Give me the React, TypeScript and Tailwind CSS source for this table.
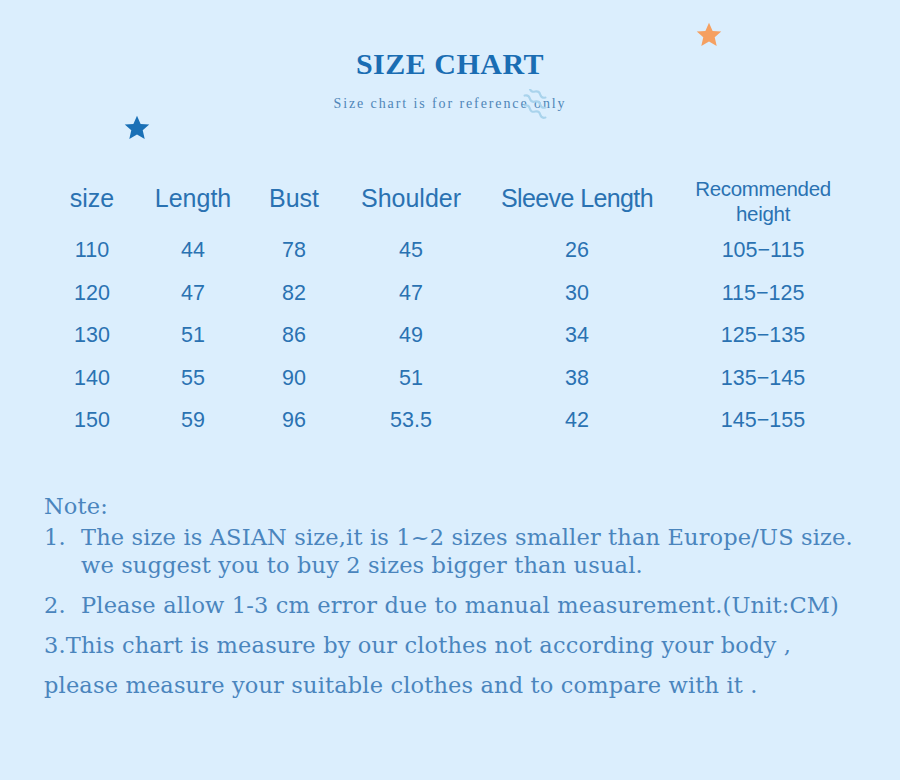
import React from 'react'

const rows = [
  ['110', '44', '78', '45', '26', '105−115'],
  ['120', '47', '82', '47', '30', '115−125'],
  ['130', '51', '86', '49', '34', '125−135'],
  ['140', '55', '90', '51', '38', '135−145'],
  ['150', '59', '96', '53.5', '42', '145−155'],
]

const cols = ['w-[100px]', 'w-[102px]', 'w-[100px]', 'w-[134px]', 'w-[198px]', 'w-[174px]']

function Star({ className, color }: { className: string; color: string }) {
  return (
    <svg viewBox="0 0 24 24" className={className}>
      <path
        d="M12 1.5l3.1 7 7.4.6-5.6 4.9 1.7 7.4L12 17.5l-6.6 3.9 1.7-7.4L1.5 9.1l7.4-.6z"
        fill={color}
      />
    </svg>
  )
}

function Waves() {
  return (
    <svg viewBox="0 0 30 36" className="absolute left-[518px] top-[89px] w-[30px] h-[36px]">
      {[6, 16, 26].map((y) => (
        <path
          key={y}
          d={`M3 ${y - 4} q3 -3 6 0 t6 0 t6 0 t6 0`}
          transform={`rotate(30 15 ${y})`}
          stroke="#a9d3ec"
          strokeWidth="2.2"
          fill="none"
          strokeLinecap="round"
        />
      ))}
    </svg>
  )
}

export default function App() {
  return (
    <div className="relative w-[900px] h-[780px] bg-[#dbeefd] overflow-hidden">
      <Star className="absolute left-[123px] top-[114px] w-[28px] h-[28px]" color="#1a70b6" />
      <Star className="absolute left-[695px] top-[21px] w-[28px] h-[28px]" color="#f5a061" />
      <Waves />

      <header className="pt-[46px] flex flex-col items-center">
        <h1 className="font-['Liberation_Serif',serif] font-bold text-[30px] leading-[36px] text-[#1a6db3] tracking-[0.5px]">
          SIZE CHART
        </h1>
        <p className="mt-[11px] font-['Liberation_Serif',serif] text-[14px] tracking-[1.9px] text-[#4f86b8]">
          Size chart is for reference only
        </p>
      </header>

      <section className="mt-[59px] pl-[42px] font-['Liberation_Sans',sans-serif] text-[#2a72b2]">
        <div className="flex items-center h-[56px]">
          {['size', 'Length', 'Bust', 'Shoulder', 'Sleeve Length'].map((h, i) => (
            <div
              key={h}
              className={`${cols[i]} text-center text-[25px] pb-[4px] ${i === 4 ? 'tracking-[-0.6px]' : 'tracking-[0px]'}`}
            >
              {h}
            </div>
          ))}
          <div className={`${cols[5]} text-center text-[20.5px] leading-[25px] tracking-[-0.3px]`}>
            Recommended
            <br />
            height
          </div>
        </div>
        {rows.map((r) => (
          <div key={r[0]} className="flex items-center h-[42.5px]">
            {r.map((c, i) => (
              <div key={i} className={`${cols[i]} text-center text-[21.5px]`}>
                {c}
              </div>
            ))}
          </div>
        ))}
      </section>

      <section className="mt-[50px] pl-[44px] font-['DejaVu_Serif',serif] text-[22.5px] leading-[28px] text-[#4a85bd] tracking-[0.15px]">
        <p>Note:</p>
        <div className="flex mt-[3px]">
          <span className="w-[37px]">1.</span>
          <span>
            The size is ASIAN size,it is 1~2 sizes smaller than Europe/US size.
            <br />
            we suggest you to buy 2 sizes bigger than usual.
          </span>
        </div>
        <div className="flex mt-[12px]">
          <span className="w-[37px]">2.</span>
          <span>Please allow 1-3 cm error due to manual measurement.(Unit:CM)</span>
        </div>
        <p className="mt-[12px]">3.This chart is measure by our clothes not according your body ,</p>
        <p className="mt-[12px]">please measure your suitable clothes and to compare with it .</p>
      </section>
    </div>
  )
}
